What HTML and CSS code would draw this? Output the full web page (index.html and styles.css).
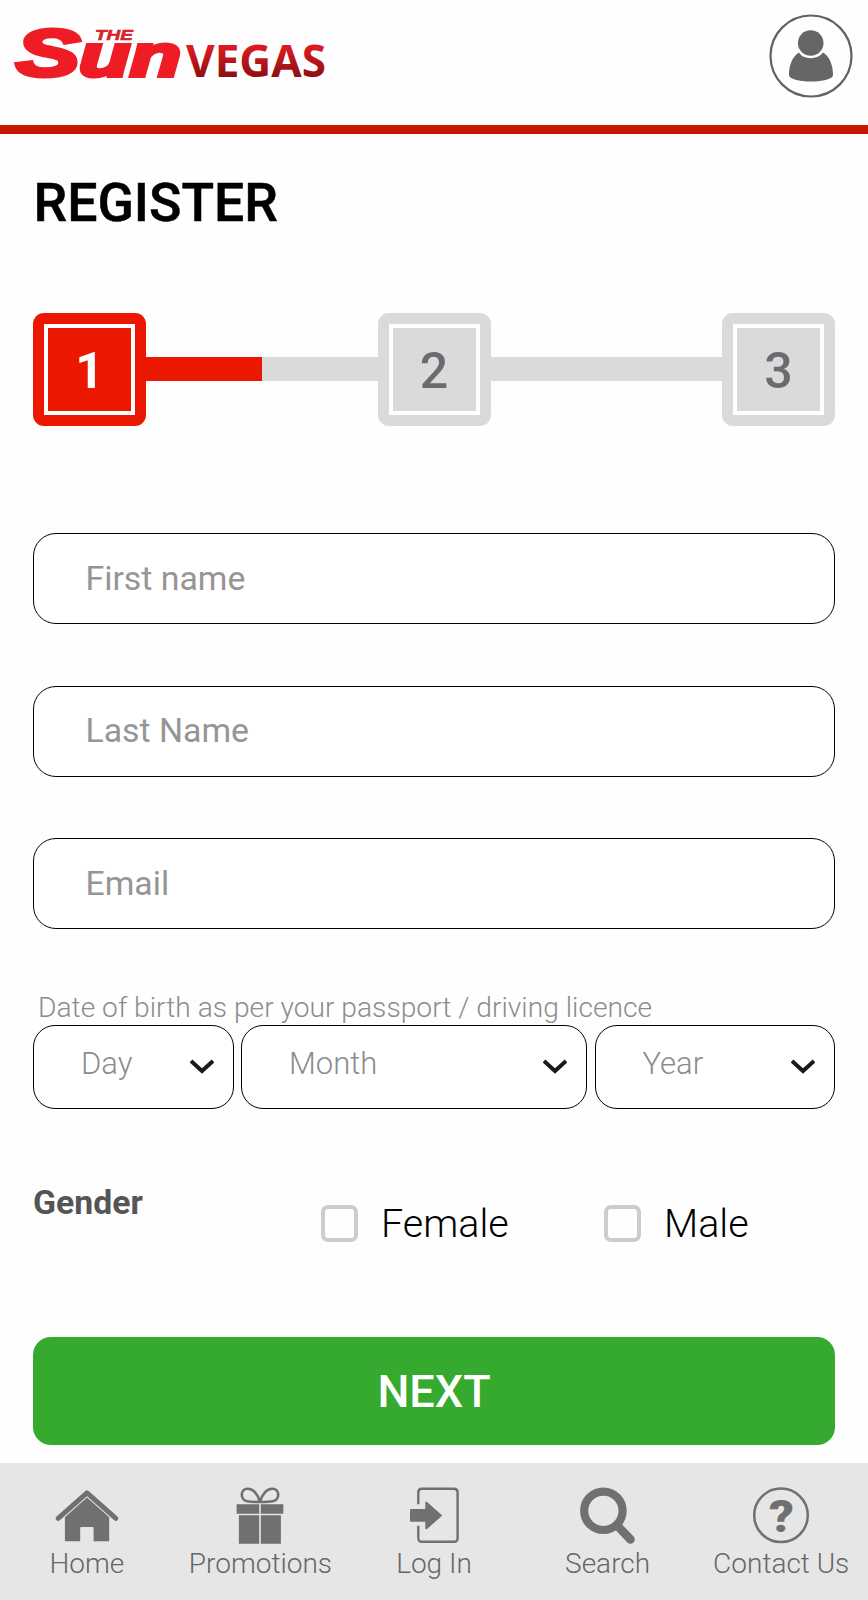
FILE: index.html
```html
<!DOCTYPE html>
<html lang="en">
<head>
    <meta charset="UTF-8">
    <meta name="viewport" content="width=device-width, initial-scale=1">
    <title>The Sun Vegas - Register</title>
    <link rel="stylesheet" href="styles.css">
</head>
<body>
    <header class="header">
        <svg class="logo" width="350" height="100" viewBox="0 0 350 100">
            <defs>
                <linearGradient id="vegas" x1="0" y1="0" x2="0" y2="1">
                    <stop offset="0.3" stop-color="#dc1a20"/>
                    <stop offset="0.8" stop-color="#8a0f12"/>
                </linearGradient>
            </defs>
            <text class="logo-sun" x="16" y="76" font-size="67" textLength="64" lengthAdjust="spacingAndGlyphs">S</text>
            <text class="logo-sun" x="79" y="76" font-size="60" textLength="102" lengthAdjust="spacingAndGlyphs">un</text>
            <text class="logo-the" x="95" y="40" font-size="15.5" textLength="38" lengthAdjust="spacingAndGlyphs">THE</text>
            <text class="logo-vegas" x="186" y="77" font-size="45" textLength="140" lengthAdjust="spacingAndGlyphs" fill="url(#vegas)">VEGAS</text>
        </svg>
        <svg class="account" width="84" height="84" viewBox="0 0 84 84">
            <circle cx="42" cy="42" r="40.5" fill="none" stroke="#626262" stroke-width="2.2"/>
            <circle cx="41.7" cy="29" r="12.8" fill="#666"/>
            <path d="M30 38.5 C34 46 49 46 54 38.5 C60 42 64 50 64 61 C64 65 54 67.5 42 67.5 C30 67.5 20 65 20 61 C20 50 24 42 30 38.5Z" fill="#666"/>
        </svg>
    </header>

    <main class="register">
        <h1>REGISTER</h1>

        <div class="steps">
            <div class="step active"><span>1</span></div>
            <div class="line half"></div>
            <div class="step"><span>2</span></div>
            <div class="line"></div>
            <div class="step"><span>3</span></div>
        </div>

        <form>
            <div class="fields">
                <input type="text" placeholder="First name">
                <input type="text" placeholder="Last Name">
                <input type="email" placeholder="Email">
            </div>

            <p class="dob-label">Date of birth as per your passport / driving licence</p>
            <div class="dob">
                <div class="select">
                    <select><option>Day</option></select>
                    <svg class="arrow" width="24" height="16" viewBox="0 0 24 16"><path d="M1 2 L12 12 L23 2"/></svg>
                </div>
                <div class="select">
                    <select><option>Month</option></select>
                    <svg class="arrow" width="24" height="16" viewBox="0 0 24 16"><path d="M1 2 L12 12 L23 2"/></svg>
                </div>
                <div class="select">
                    <select><option>Year</option></select>
                    <svg class="arrow" width="24" height="16" viewBox="0 0 24 16"><path d="M1 2 L12 12 L23 2"/></svg>
                </div>
            </div>

            <div class="gender">
                <span class="gender-title">Gender</span>
                <label><input type="checkbox" value="female">Female</label>
                <label><input type="checkbox" value="male">Male</label>
            </div>

            <button type="button" class="next">NEXT</button>
        </form>
    </main>

    <nav class="bottom-nav">
        <a>
            <svg width="64" height="60" viewBox="0 0 64 60">
                <path d="M3.2 32.3 L32 6.8 L60.8 32.3" fill="none" stroke="#707070" stroke-width="5" stroke-linecap="round" stroke-linejoin="round"/>
                <path d="M32 11.5 L54.2 31.3 V54.3 Q54.2 55.3 53.2 55.3 H38.6 V42 Q38.6 41 37.6 41 H26.2 Q25.2 41 25.2 42 V55.3 H10.9 Q9.9 55.3 9.9 54.3 V31.3Z" fill="#707070"/>
            </svg>
            Home
        </a>
        <a>
            <svg width="64" height="60" viewBox="0 0 64 60">
                <path d="M32 16 C30 8 25 2.6 19.5 2.8 C12 3 12 14 19 15.3 C23 16 28 16 32 16 C36 16 41 16 45 15.3 C52 14 52 3 44.5 2.8 C39 2.6 34 8 32 16Z" fill="none" stroke="#707070" stroke-width="2.6"/>
                <path d="M8.6 18.3H31.2V27.7H8.6Z M32.8 18.3H55.3V27.7H32.8Z M10.9 29.3H31.2V57.7H10.9Z M32.8 29.3H52.9V57.7H32.8Z" fill="#707070"/>
            </svg>
            Promotions
        </a>
        <a>
            <svg width="64" height="60" viewBox="0 0 64 60">
                <path d="M16.3 18.3 V6.5 Q16.3 2.8 20 2.8 H52 Q55.6 2.8 55.6 6.5 V52 Q55.6 55.8 52 55.8 H20 Q16.3 55.8 16.3 52 V39.7" fill="none" stroke="#707070" stroke-width="2.4"/>
                <path d="M9 23 H23.3 V16.5 Q23.5 15 25 16 L40.3 29.4 L25 43 Q23.5 44 23.3 42.3 V35.7 H9 Q8 35.7 8 34.7 V24 Q8 23 9 23Z" fill="#707070"/>
            </svg>
            Log In
        </a>
        <a>
            <svg width="64" height="60" viewBox="0 0 64 60">
                <circle cx="27.4" cy="24.8" r="19.2" fill="none" stroke="#707070" stroke-width="8.2"/>
                <path d="M40 38.5 L42 40.5" stroke="#707070" stroke-width="8"/>
                <path d="M43.5 42 L54.5 53.5" stroke="#707070" stroke-width="8.6" stroke-linecap="round"/>
            </svg>
            Search
        </a>
        <a>
            <svg width="64" height="60" viewBox="0 0 64 60">
                <circle cx="32" cy="29.3" r="26.8" fill="none" stroke="#707070" stroke-width="2.5"/>
                <text class="question" x="20" y="45.5" font-size="45" textLength="25" lengthAdjust="spacingAndGlyphs">?</text>
            </svg>
            Contact Us
        </a>
    </nav>
</body>
</html>
```
FILE: styles.css
```css
* {
    box-sizing: border-box;
}
body {
    margin: 0;
    font-family: Roboto, "Liberation Sans", sans-serif;
    background: #fefefe;
    color: #000;
}

/* header */
.header {
    display: flex;
    justify-content: space-between;
    height: 134px;
    border-bottom: 9px solid #cb1500;
}
.logo-sun {
    font-family: "Liberation Sans", sans-serif;
    font-weight: 700;
    font-style: italic;
    fill: #ee1c25;
    stroke: #ee1c25;
    stroke-width: 4px;
}
.logo-the {
    font-family: "Liberation Sans", sans-serif;
    font-weight: 700;
    font-style: italic;
    fill: #d8232a;
    stroke: #d8232a;
    stroke-width: 0.6px;
}
.logo-vegas {
    font-family: "Open Sans", sans-serif;
    font-weight: 700;
}
.account {
    margin: 14px 15px 0 0;
}

/* register form */
.register {
    padding: 39px 33px 18px;
}
h1 {
    margin: 0 0 79.5px;
    padding-left: 0.5px;
    font-size: 53.5px;
    line-height: 60px;
    font-weight: 500;
    -webkit-text-stroke: 0.5px #000;
}
.steps {
    display: flex;
    align-items: center;
    margin-bottom: 107.5px;
}
.step {
    width: 113px;
    height: 113px;
    padding: 11px;
    border-radius: 11px;
    background: #dadada;
    color: #6e6870;
}
.step span {
    display: flex;
    align-items: center;
    justify-content: center;
    height: 100%;
    padding-top: 3px;
    border: 4px solid #fff;
    font-size: 50px;
    font-weight: 500;
}
.step.active {
    background: #eb1700;
    color: #fff;
}
.step.active span {
    font-weight: 700;
}
.line {
    flex: 1;
    height: 24px;
    background: #dadada;
}
.line.half {
    background: linear-gradient(to right, #eb1700 50%, #dadada 50%);
}
.fields {
    display: flex;
    flex-direction: column;
    gap: 61.5px;
}
.fields input {
    width: 100%;
    height: 91px;
    padding: 0 51.5px 1px;
    border: 1px solid #000;
    border-radius: 23px;
    background: #fff;
    font-family: inherit;
    font-size: 33.8px;
}
.fields input::placeholder {
    color: #959595;
    opacity: 1;
}
.dob-label {
    margin: 60.5px 0 -1px 5px;
    font-size: 28.2px;
    line-height: 36.5px;
    font-weight: 300;
    color: #8c8c8c;
}
.dob {
    display: grid;
    grid-template-columns: 200.5px 346px 240px;
    column-gap: 7.5px;
}
.select {
    position: relative;
}
.select select {
    appearance: none;
    display: block;
    width: 100%;
    height: 84px;
    padding: 0 47px 8px;
    border: 1px solid #000;
    border-radius: 22px;
    background: #fff;
    font-family: inherit;
    font-size: 31px;
    font-weight: 300;
    color: #8c8c8c;
}
.arrow {
    position: absolute;
    right: 20px;
    top: 34px;
    fill: none;
    stroke: #1a1a1a;
    stroke-width: 4;
}
.gender {
    display: flex;
    margin-top: 74px;
    height: 59px;
}
.gender-title {
    flex: none;
    width: 288px;
    font-size: 33.8px;
    line-height: 40px;
    font-weight: 700;
    color: #555;
}
.gender label {
    display: flex;
    flex: none;
    align-items: center;
    gap: 23px;
    width: 283px;
    height: 37px;
    margin-top: 22px;
    font-size: 39.5px;
    font-weight: 300;
    line-height: 35px;
}
.gender label:last-child {
    width: auto;
}
.gender input {
    appearance: none;
    width: 37px;
    height: 37px;
    margin: 0;
    border: 4px solid #ccc;
    border-radius: 7px;
}
.next {
    display: block;
    width: 100%;
    height: 107.5px;
    margin-top: 95px;
    padding-top: 2px;
    border: 0;
    border-radius: 18px;
    background: #35aa2e;
    color: #fff;
    font-family: inherit;
    font-size: 45px;
    font-weight: 500;
}

/* bottom bar */
.bottom-nav {
    display: grid;
    grid-template-columns: repeat(5, 1fr);
    height: 137.5px;
    padding-top: 23.5px;
    background: #e6e6e6;
}
.bottom-nav a {
    display: flex;
    flex-direction: column;
    align-items: center;
    font-size: 28px;
    line-height: 35px;
    font-weight: 300;
    color: #666;
    white-space: nowrap;
}
.question {
    font-weight: 900;
    fill: #707070;
}
```
